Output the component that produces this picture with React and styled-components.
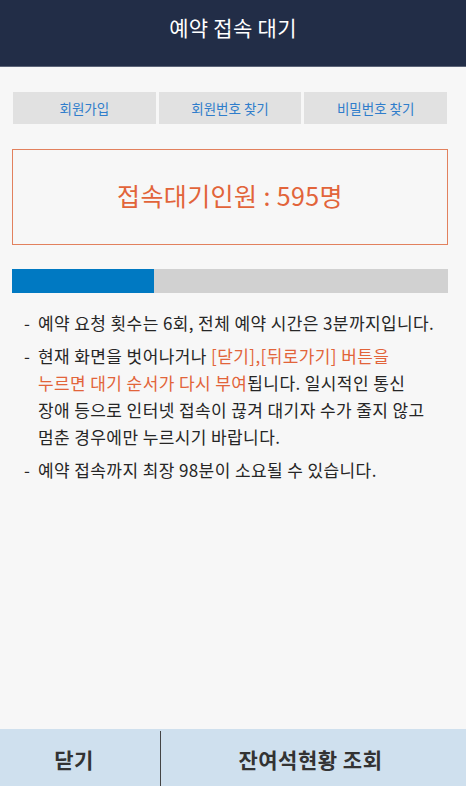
import React from "react";
import styled, { createGlobalStyle } from "styled-components";

const GlobalStyle = createGlobalStyle`
  html, body {
    margin: 0;
    padding: 0;
    background: #f7f7f7;
  }
  *, *::before, *::after {
    box-sizing: border-box;
  }
  body {
    font-family: "Noto Sans CJK KR", "Noto Sans", sans-serif;
  }
`;

const tabs = ["회원가입", "회원번호 찾기", "비밀번호 찾기"];

export default function App() {
  const progress = 142 / 436;

  return (
    <>
      <GlobalStyle />
      <Page>
        <Header>예약 접속 대기</Header>
        <Content>
          <Tabs>
            {tabs.map((t) => (
              <Tab key={t}>{t}</Tab>
            ))}
          </Tabs>
          <CountBox>접속대기인원 : 595명</CountBox>
          <Bar>
            <Fill style={{ width: `${progress * 100}%` }} />
          </Bar>
          <Notes>
            <Note>예약 요청 횟수는 6회, 전체 예약 시간은 3분까지입니다.</Note>
            <Note>
              현재 화면을 벗어나거나 <Warn>[닫기],[뒤로가기] 버튼을</Warn>
              <br />
              <Warn>누르면 대기 순서가 다시 부여</Warn>됩니다. 일시적인 통신
              <br />
              장애 등으로 인터넷 접속이 끊겨 대기자 수가 줄지 않고
              <br />
              멈춘 경우에만 누르시기 바랍니다.
            </Note>
            <Note>예약 접속까지 최장 98분이 소요될 수 있습니다.</Note>
          </Notes>
        </Content>
        <Footer>
          <FooterButton $w="160px" $shift="12px">닫기</FooterButton>
          <FooterButton $divider $shift="6px">잔여석현황 조회</FooterButton>
        </Footer>
      </Page>
    </>
  );
}

const Page = styled.div`
  width: 466px;
  height: 786px;
  display: flex;
  flex-direction: column;
  background: #f7f7f7;
  overflow: hidden;
`;

const Header = styled.div`
  height: 67px;
  flex-shrink: 0;
  background: #222d47;
  border-bottom: 1px solid #5c6478;
  color: #ffffff;
  font-size: 21px;
  letter-spacing: 0.3px;
  display: flex;
  align-items: center;
  justify-content: center;
  padding-bottom: 12px;
`;

const Content = styled.div`
  flex: 1;
  padding: 25px 18px 0 12px;
  display: flex;
  flex-direction: column;
`;

const Tabs = styled.div`
  display: flex;
  gap: 3px;
  padding: 0 1px;
  margin-bottom: 25px;
`;

const Tab = styled.div`
  flex: 1;
  height: 32px;
  background: #e1e1e1;
  color: #2f7dcb;
  font-size: 13.5px;
  display: flex;
  align-items: center;
  justify-content: center;
`;

const CountBox = styled.div`
  height: 96px;
  border: 1.5px solid #e2815e;
  color: #e2643a;
  font-size: 25px;
  letter-spacing: 0.4px;
  display: flex;
  align-items: center;
  justify-content: center;
  padding-bottom: 4px;
  margin-bottom: 24px;
`;

const Bar = styled.div`
  height: 24px;
  background: #d1d1d1;
  margin-bottom: 16px;
`;

const Fill = styled.div`
  height: 100%;
  background: #0079c2;
`;

const Notes = styled.ul`
  list-style: none;
  margin: 0;
  padding: 0 0 0 12px;
  display: flex;
  flex-direction: column;
  gap: 6px;
`;

const Note = styled.li`
  position: relative;
  padding-left: 14px;
  font-size: 17px;
  line-height: 27px;
  color: #262626;
  letter-spacing: 0.4px;

  &::before {
    content: "-";
    position: absolute;
    left: 0;
    top: 0;
  }
`;

const Warn = styled.span`
  color: #e2643a;
`;

const Footer = styled.div`
  height: 57px;
  flex-shrink: 0;
  background: #cfe0ee;
  display: flex;
`;

const FooterButton = styled.div`
  ${(p) => (p.$w ? `width: ${p.$w};` : "flex: 1;")}
  border-left: ${(p) => (p.$divider ? "1px solid #444" : "none")};
  margin: 2px 0 0;
  padding-right: ${(p) => p.$shift || "0"};
  color: #333333;
  font-size: 21px;
  font-weight: 700;
  letter-spacing: 0.5px;
  display: flex;
  align-items: center;
  justify-content: center;
`;
